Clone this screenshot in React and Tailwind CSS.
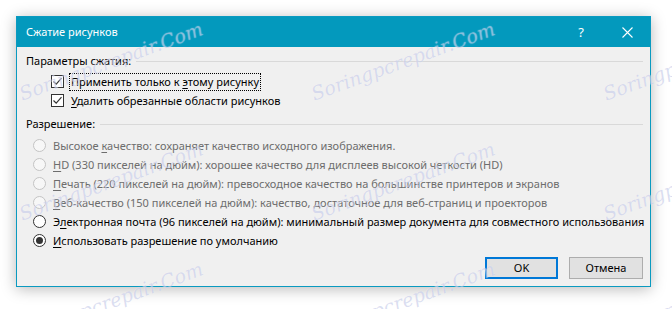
import React from "react";

const font = { fontFamily: '"Noto Sans", "Liberation Sans", sans-serif' };

function U({ children }) {
  return <span className="underline underline-offset-[2px] decoration-[1px]">{children}</span>;
}

function Check() {
  return (
    <span className="w-[13px] h-[13px] border border-[#333333] bg-white flex items-center justify-center shrink-0">
      <svg width="11" height="11" viewBox="0 0 11 11">
        <path d="M1.5 5.5 L4.2 8.2 L9.5 2.2" fill="none" stroke="#333333" strokeWidth="1.2" />
      </svg>
    </span>
  );
}

function Radio({ disabled, checked }) {
  return (
    <span
      className={
        "w-[13px] h-[13px] rounded-full border flex items-center justify-center shrink-0 " +
        (disabled ? "border-[#c4c4c4] bg-[#f7f7f7]" : "border-[#333333] bg-white")
      }
    >
      {checked && <span className="w-[7px] h-[7px] rounded-full bg-[#333333]" />}
    </span>
  );
}

function RadioRow({ disabled, checked, children }) {
  return (
    <div className="h-[19px] flex items-center pl-[7px]">
      <Radio disabled={disabled} checked={checked} />
      <span className={"ml-[7px] whitespace-nowrap " + (disabled ? "text-[#6d6d6d]" : "text-black")}>{children}</span>
    </div>
  );
}

function Header({ children }) {
  return (
    <div className="h-[16px] flex items-center">
      <span className="whitespace-nowrap">{children}</span>
      <span className="flex-1 h-px bg-[#d9d9d9] ml-[5px] mr-[7px]" />
    </div>
  );
}

function Watermark({ x, y }) {
  return (
    <div
      className="absolute text-[19px] italic whitespace-nowrap text-[rgba(150,160,215,0.34)] pointer-events-none"
      style={{
        left: x,
        top: y,
        transform: "translate(-50%,-50%) rotate(-20deg)",
        fontFamily: '"DejaVu Serif", serif',
        textShadow: "0 0 1px rgba(255,255,255,0.6)",
      }}
    >
      Soringpcrepair.Com
    </div>
  );
}

export default function App() {
  const wms = [];
  [61, 181, 301].forEach((y) => [111, 403, 695].forEach((x) => wms.push([x, y])));
  return (
    <div className="w-[672px] h-[309px] bg-white relative overflow-hidden text-[11px] leading-[16px]" style={font}>
      <div className="ml-[16px] mt-[16px] w-[635px] h-[271px] border border-[#0a9ac0] flex flex-col bg-[#f0f0f0] shadow-[0_2px_14px_rgba(0,0,0,0.28)]">
        <div className="h-[30px] bg-[#0399bd] flex items-center text-white pl-[9px] shrink-0">
          <span className="text-[11px]">Сжатие рисунков</span>
          <span className="ml-auto text-[13px] mr-[38px]">?</span>
          <svg width="11" height="11" viewBox="0 0 11 11" className="mr-[17px]">
            <path d="M0.5 0.5 L10.5 10.5 M10.5 0.5 L0.5 10.5" stroke="white" strokeWidth="1.1" />
          </svg>
        </div>
        <div className="flex-1 flex flex-col pl-[9px] pt-[6px] text-black">
          <Header>Параметры сжатия:</Header>
          <div className="mt-[3px] h-[19px] flex items-center pl-[25px]">
            <Check />
            <span className="ml-[5px] border border-dotted border-black px-[1px] h-[18px] flex items-center whitespace-pre">
              Применить только к{" "}<U>э</U>тому рисунку
            </span>
          </div>
          <div className="h-[19px] flex items-center pl-[25px]">
            <Check />
            <span className="ml-[7px] whitespace-nowrap">
              <U>У</U>далить обрезанные области рисунков
            </span>
          </div>
          <div className="mt-[6px]">
            <Header>Разрешение:</Header>
          </div>
          <div className="mt-[4px] flex flex-col">
            <RadioRow disabled>
              Высокое <U>к</U>ачество: сохраняет качество исходного изображения.
            </RadioRow>
            <RadioRow disabled>
              <U>H</U>D (330 пикселей на дюйм): хорошее качество для дисплеев высокой четкости (HD)
            </RadioRow>
            <RadioRow disabled>
              <U>П</U>ечать (220 пикселей на дюйм): превосходное качество на большинстве принтеров и экранов
            </RadioRow>
            <RadioRow disabled>
              <U>В</U>еб-качество (150 пикселей на дюйм): качество, достаточное для веб-страниц и проекторов
            </RadioRow>
            <RadioRow>
              Э<U>л</U>ектронная почта (96 пикселей на дюйм): минимальный размер документа для совместного использования
            </RadioRow>
            <RadioRow checked>
              <U>И</U>спользовать разрешение по умолчанию
            </RadioRow>
          </div>
          <div className="mt-[7px] flex justify-end pr-[7px] gap-[11px]">
            <button className="w-[73px] h-[22px] border-2 border-[#0078d7] bg-[#e1e1e1] flex items-center justify-center">
              OK
            </button>
            <button className="w-[74px] h-[22px] border border-[#adadad] bg-[#e1e1e1] flex items-center justify-center">
              Отмена
            </button>
          </div>
        </div>
      </div>
      {wms.map(([x, y], i) => (
        <Watermark key={i} x={x} y={y} />
      ))}
    </div>
  );
}
